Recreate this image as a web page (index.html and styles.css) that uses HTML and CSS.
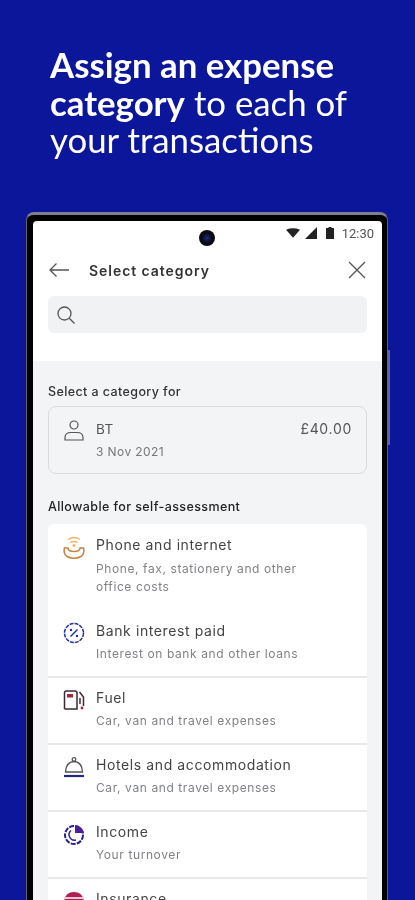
FILE: index.html
```html
<!DOCTYPE html>
<html lang="en">

<head>
  <meta charset="UTF-8">
  <meta name="viewport" content="width=device-width, initial-scale=1.0">
  <title>Select category</title>
  <link rel="stylesheet" href="styles.css">
</head>

<body>
  <div class="page">
    <h1 class="headline"><b>Assign an expense</b> <b>category</b> to each of your transactions</h1>

    <div class="phone">
      <div class="side-button"></div>
      <div class="camera"></div>
      <div class="screen">
        <div class="status-bar">
          <svg width="14" height="10" viewBox="0 0 15 10"><path d="M0 1.500Q7.500-1.500 15 1.500L7.500 10Z" fill="#222"/></svg>
          <svg width="12" height="12" viewBox="0 0 12 12"><path d="M0 12L12 0V12Z" fill="#222"/></svg>
          <svg class="battery" width="8" height="12" viewBox="0 0 8 12"><path d="M2.500 0H5.500V1H8V12H0V1H2.500Z" fill="#222"/></svg>
          <span class="time">12:30</span>
        </div>

        <div class="top-bar">
          <svg class="back" width="20" height="14" viewBox="0 0 20 14" fill="none" stroke="#555" stroke-width="1.300"><path d="M20 7H1M7.500 .5L1 7l6.500 6.500"/></svg>
          <div class="top-title">Select category</div>
          <svg width="18" height="18" viewBox="0 0 18 18" fill="none" stroke="#555" stroke-width="1.300"><path d="M1 1L17 17M17 1L1 17"/></svg>
        </div>

        <div class="search">
          <svg width="20" height="20" viewBox="0 0 20 20" fill="none" stroke="#555" stroke-width="1.300"><circle cx="8.500" cy="8.500" r="6.500"/><path d="M13.300 13.300L18.500 18.500"/></svg>
        </div>

        <div class="content">
          <div class="section-label">Select a category for</div>
          <div class="tx-card">
            <svg class="tx-icon" width="20" height="21" viewBox="0 0 20 21" fill="none" stroke="#555" stroke-width="1.200"><circle cx="10" cy="5" r="4"/><path d="M1 20v-2.500C1 14 4 12.500 7 12.500h6c3 0 6 1.500 6 5V20Z"/></svg>
            <div class="tx-info">
              <div class="tx-name">BT</div>
              <div class="tx-date">3 Nov 2021</div>
            </div>
            <div class="tx-amount">£40.00</div>
          </div>

          <div class="section-label second">Allowable for self-assessment</div>
          <div class="list">
            <div class="row first">
              <svg class="row-icon" width="24" height="24" viewBox="0 0 24 24" fill="none" stroke-width="1.500"><path d="M6 3.500Q12 -.5 18 3.500M8.500 6.500Q12 4.500 15.500 6.500" stroke="#f6b26b"/><circle cx="12" cy="9.500" r="1.500" fill="#f6b26b"/><path d="M6 12H2.500Q1 17.500 5 20.500Q12 24 19 20.500Q23 17.500 21.500 12H18Q18 15.500 12 15.500Q6 15.500 6 12Z" stroke="#c9823f"/></svg>
              <div>
                <div class="row-title">Phone and internet</div>
                <div class="row-sub">Phone, fax, stationery and other<br>office costs</div>
              </div>
            </div>
            <div class="row second-row">
              <svg class="row-icon" width="24" height="24" viewBox="0 0 24 24" fill="none" stroke="#23319c" stroke-width="1.500"><circle cx="12" cy="11" r="9.500" stroke-dasharray="4 1"/><path d="M8.500 14.500L15.500 7.500"/><circle cx="9" cy="8" r="1.200" fill="#23319c" stroke="none"/><circle cx="15" cy="14" r="1.200" fill="#23319c" stroke="none"/></svg>
              <div>
                <div class="row-title">Bank interest paid</div>
                <div class="row-sub">Interest on bank and other loans</div>
              </div>
            </div>
            <div class="row">
              <svg class="row-icon" width="24" height="24" viewBox="0 0 24 24" fill="none" stroke="#3c2a30" stroke-width="1.500"><path d="M2.500 20V4Q2.500 2 4.500 2H13Q15 2 15 4V20H2.500"/><rect x="5" y="5" width="6" height="3.500" fill="#a3243c" stroke="none"/><path d="M17.500 3L21.500 8V17" stroke="#3c2a30"/><circle cx="20" cy="19" r="1.400" fill="#a3243c" stroke="none"/><path d="M18 9V15" stroke="#3c2a30"/></svg>
              <div>
                <div class="row-title">Fuel</div>
                <div class="row-sub">Car, van and travel expenses</div>
              </div>
            </div>
            <div class="row">
              <svg class="row-icon" width="24" height="24" viewBox="0 0 24 24" fill="none" stroke="#555" stroke-width="1.300"><circle cx="12" cy="3.500" r="1.800"/><path d="M3.500 16Q4 6 12 5.500Q20 6 20.500 16Z"/><path d="M2 20H22" stroke="#23297a" stroke-width="2.200"/></svg>
              <div>
                <div class="row-title">Hotels and accommodation</div>
                <div class="row-sub">Car, van and travel expenses</div>
              </div>
            </div>
            <div class="row">
              <svg class="row-icon" width="24" height="24" viewBox="0 0 24 24" fill="none" stroke="#2c1f8a" stroke-width="2"><circle cx="12" cy="12" r="9" stroke-dasharray="5 1.200"/><path d="M13 2A10 10 0 0 1 22 10H13Z" fill="#4a1f9c" stroke="none"/><path d="M9 7.500A5.500 5.500 0 0 0 14 17" stroke-width="1.500"/></svg>
              <div>
                <div class="row-title">Income</div>
                <div class="row-sub">Your turnover</div>
              </div>
            </div>
            <div class="row">
              <svg class="row-icon" width="24" height="24" viewBox="0 0 24 24"><path d="M2 14Q2 2 12 2Q22 2 22 14Z" fill="#b01f55"/><rect x="2" y="7" width="20" height="2" fill="#f3c7d6"/></svg>
              <div>
                <div class="row-title">Insurance</div>
              </div>
            </div>
          </div>
        </div>
      </div>
    </div>
  </div>
</body>

</html>
```

FILE: styles.css
```css
body {
  margin: 0;
  background: #0b169b;
}

.page {
  width: 415px;
  height: 900px;
  overflow: hidden;
  background: #0b169b;
  filter: blur(.4px);
}

.headline {
  margin: 0;
  padding: 46px 30px 0 50px;
  height: 212px;
  box-sizing: border-box;
  font-family: "Lato", sans-serif;
  font-size: 34.800px;
  line-height: 37.500px;
  font-weight: 400;
  color: #fff;
}

.headline b {
  font-weight: 700;
}

.phone {
  position: relative;
  width: 349px;
  height: 700px;
  margin-left: 26px;
  padding: 6px 5px 0 6px;
  background: #000;
  border-top: 3px solid #7c8090;
  border-left: 1px solid #5a5f70;
  border-right: 1px solid #5a5f70;
  border-radius: 8px 8px 0 0;
}

.side-button {
  position: absolute;
  right: -3px;
  top: 135px;
  width: 2px;
  height: 95px;
  background: #5f65b0;
}

.camera {
  position: absolute;
  left: 172px;
  top: 15px;
  width: 16px;
  height: 16px;
  border-radius: 50%;
  background: radial-gradient(circle, #1c2a80 0, #0a0a14 45%);
}

.screen {
  background: #fff;
  border-radius: 4px 4px 0 0;
  height: 100%;
  font-family: "Inter", "Roboto", sans-serif;
  color: #333;
}

.status-bar {
  display: flex;
  justify-content: flex-end;
  align-items: center;
  gap: 5px;
  height: 24px;
  padding: 0 8px 0 0;
}

.status-bar .battery {
  margin-left: 4px;
}

.time {
  margin-left: 3px;
  font-family: "Roboto", sans-serif;
  font-size: 13px;
  color: #555;
}

.top-bar {
  display: flex;
  align-items: center;
  height: 50px;
  padding: 0 16px;
}

.back {
  margin-right: 20px;
}

.top-title {
  flex: 1;
  font-size: 14px;
  font-weight: 600;
  letter-spacing: .95px;
  color: #333;
}

.search {
  display: flex;
  align-items: center;
  height: 37px;
  margin: 1px 15px 28px;
  padding-left: 8px;
  background: #f1f2f3;
  border-radius: 6px;
}

.content {
  height: 100%;
  padding: 22px 15px 0;
  background: #f3f4f6;
}

.section-label {
  font-size: 12.500px;
  line-height: 18px;
  font-weight: 500;
  letter-spacing: .4px;
  color: #333;
}

.section-label.second {
  margin-top: 24px;
  color: #222;
}

.tx-card {
  display: flex;
  align-items: flex-start;
  height: 68px;
  box-sizing: border-box;
  margin-top: 5px;
  padding: 13px 14px 0 15px;
  border: 1px solid #d9dcdf;
  border-radius: 8px;
}

.tx-icon {
  margin-right: 12px;
}

.tx-info {
  flex: 1;
}

.tx-name {
  font-size: 13.500px;
  line-height: 18px;
  letter-spacing: .5px;
  color: #555;
}

.tx-date {
  margin-top: 5px;
  font-size: 12px;
  line-height: 18px;
  letter-spacing: .4px;
  color: #777;
}

.tx-amount {
  font-size: 14px;
  line-height: 18px;
  letter-spacing: .7px;
  color: #555;
}

.list {
  margin-top: 8px;
  background: #fff;
  border-radius: 6px 6px 0 0;
}

.row {
  display: flex;
  align-items: flex-start;
  height: 67px;
  box-sizing: border-box;
  padding: 11px 12px 0 14px;
  border-top: 2px solid #e8e9eb;
}

.row.first {
  height: 86px;
  padding-top: 12px;
  border-top: none;
}

.row.first .row-sub {
  margin-top: 6px;
}

.row.second-row {
  height: 66px;
  padding-top: 12px;
  border-top: none;
}

.row-icon {
  flex-shrink: 0;
  margin-right: 10px;
}

.row-title {
  font-size: 14px;
  line-height: 18px;
  letter-spacing: .6px;
  color: #444;
}

.row-sub {
  margin-top: 5px;
  font-size: 12px;
  line-height: 18px;
  letter-spacing: .6px;
  color: #808285;
}
```
